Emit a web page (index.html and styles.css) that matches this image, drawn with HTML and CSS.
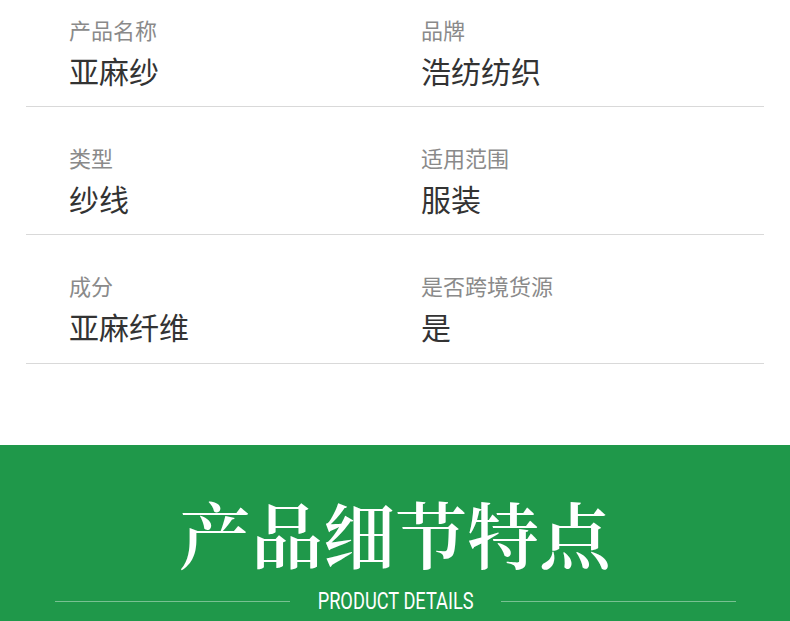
FILE: index.html
```html
<!DOCTYPE html>
<html lang="zh">
<head>
  <meta charset="UTF-8">
  <title>产品参数</title>
  <meta name="viewport" content="width=device-width, initial-scale=1.0">
  <link rel="stylesheet" href="styles.css">
</head>
<body>
  <div class="specs">
    <div class="fila">
      <div class="celda">
        <p class="etiqueta">产品名称</p>
        <p class="valor">亚麻纱</p>
      </div>
      <div class="celda">
        <p class="etiqueta">品牌</p>
        <p class="valor">浩纺纺织</p>
      </div>
    </div>
    <div class="fila">
      <div class="celda">
        <p class="etiqueta">类型</p>
        <p class="valor">纱线</p>
      </div>
      <div class="celda">
        <p class="etiqueta">适用范围</p>
        <p class="valor">服装</p>
      </div>
    </div>
    <div class="fila">
      <div class="celda">
        <p class="etiqueta">成分</p>
        <p class="valor">亚麻纤维</p>
      </div>
      <div class="celda">
        <p class="etiqueta">是否跨境货源</p>
        <p class="valor">是</p>
      </div>
    </div>
  </div>

  <section class="detalles">
    <h2>产品细节特点</h2>
    <div class="subtitulo">
      <span class="linea"></span>
      <span class="texto">PRODUCT DETAILS</span>
      <span class="linea"></span>
    </div>
  </section>
</body>
</html>
```

FILE: styles.css
```css
body {
  margin: 0;
  font-family: "Noto Sans CJK SC", "Noto Sans", sans-serif;
  background: white;
}
.specs {
  padding: 0 26px 81px;
}
.fila {
  display: grid;
  grid-template-columns: 352px 1fr;
  padding: 39px 0 21px 43px;
  border-bottom: 1px solid #d9d9d9;
}
.fila:first-child {
  padding-top: 18px;
}
.fila:last-child {
  padding-bottom: 22px;
}
.celda p {
  margin: 0;
}
.etiqueta {
  font-size: 22px;
  line-height: 22px;
  color: #8a8a8a;
}
.valor {
  font-size: 30px;
  line-height: 30px;
  color: #333;
  margin-top: 15px !important;
}
.detalles {
  background: #1f984a;
  color: white;
  text-align: center;
  padding-top: 42px;
  height: 200px;
}
.detalles h2 {
  margin: 0;
  font-family: "Noto Serif CJK SC", "Source Han Serif SC", "AR PL UMing CN", serif;
  font-weight: 600;
  font-size: 72px;
  line-height: 90px;
}
.subtitulo {
  display: flex;
  align-items: center;
  gap: 27px;
  margin: 11px 54px 0 55px;
}
.linea {
  flex: 1;
  height: 1px;
  background: rgba(255,255,255,0.4);
}
.texto {
  font-family: Roboto, sans-serif;
  font-size: 24px;
  line-height: 26px;
  display: inline-block;
  white-space: nowrap;
  transform: scaleX(0.76);
  margin: 0 -24px;
}
```
